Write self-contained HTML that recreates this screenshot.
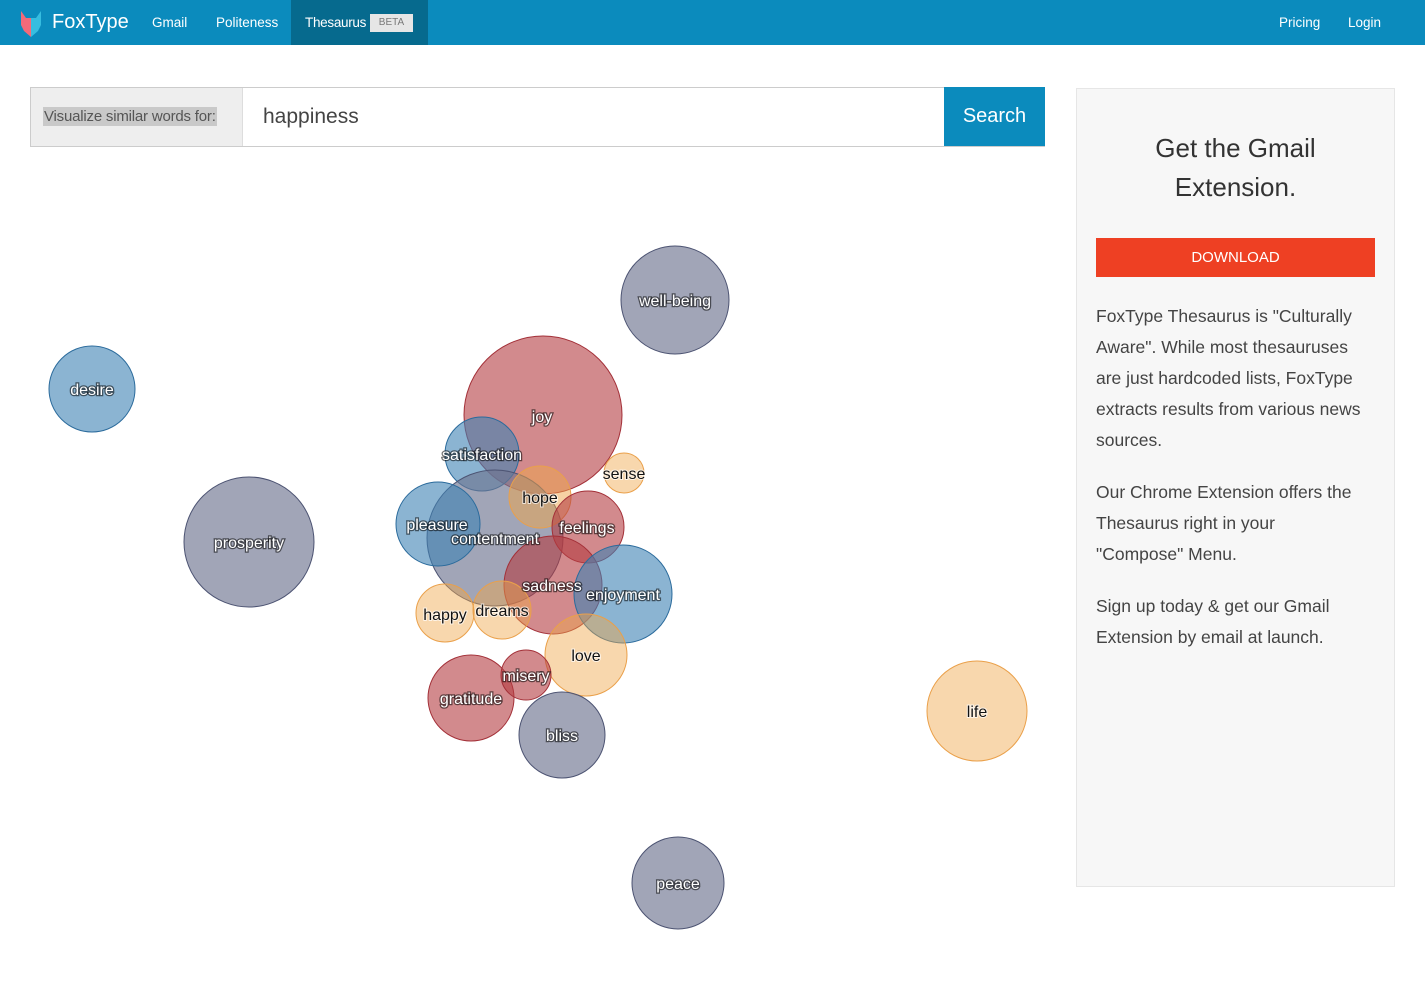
<!DOCTYPE html>
<html><head><meta charset="utf-8"><style>
*{margin:0;padding:0;box-sizing:border-box}
body{width:1425px;height:982px;background:#fff;font-family:"Liberation Sans",sans-serif;position:relative;overflow:hidden}
.nav{position:absolute;left:0;top:0;width:1425px;height:45px;background:#0b8bbd}
.nav a{position:absolute;top:0;height:45px;line-height:45px;color:#fff;font-size:13.5px;text-decoration:none}
.act{position:absolute;left:291px;top:0;width:137px;height:45px;background:#066a8e}
.beta{position:absolute;left:370px;top:14px;width:43px;height:18px;background:#e6e6e6;color:#777;font-size:10px;text-align:center;line-height:18px}
.search{position:absolute;left:30px;top:87px;width:1015px;height:60px;border:1px solid #ccc}
.lbl{position:absolute;left:0;top:0;width:212px;height:58px;background:#eee;border-right:1px solid #ddd}
.lbl span{position:absolute;left:12px;top:19px;background:#c9c9c9;color:#555;font-size:15px;padding:1px 1px;letter-spacing:-0.2px}
.q{position:absolute;left:232px;top:17px;font-size:21px;color:#444}
.btn{position:absolute;left:944px;top:87px;width:101px;height:59px;background:#0b8bbd;color:#fff;font-size:20px;text-align:center;line-height:59px}
.side{position:absolute;left:1076px;top:88px;width:319px;height:799px;background:#f7f7f7;border:1px solid #e6e6e6}
.side h2{position:absolute;left:0;top:40px;width:317px;text-align:center;font-weight:normal;font-size:26px;line-height:39px;color:#333}
.dl{position:absolute;left:19px;top:149px;width:279px;height:39px;background:#ee4023;color:#fff;text-align:center;line-height:39px;font-size:15px}
.side p{position:absolute;left:19px;white-space:nowrap;font-size:17.5px;line-height:31px;color:#444}
svg text{font-family:"Liberation Sans",sans-serif;font-size:16px;text-anchor:middle}
.w{fill:#fff;paint-order:stroke;stroke:rgba(0,0,0,.55);stroke-width:2.5px}
.k{fill:#111;paint-order:stroke;stroke:rgba(255,255,255,.7);stroke-width:2px}
</style></head><body>
<div class="nav">
<svg style="position:absolute;left:20px;top:11px" width="22" height="26" viewBox="0 0 22 26"><path d="M1 0 L6 7 L11 7 L11 26 L4 20 L1 14Z" fill="#f26a7a"/><path d="M21 0 L16 7 L11 7 L11 26 L18 20 L21 14Z" fill="#36bde0"/></svg>
<a style="left:52px;font-size:20px">FoxType</a>
<a style="left:152px">Gmail</a>
<a style="left:216px">Politeness</a>
<div class="act"></div>
<a style="left:305px;letter-spacing:-0.3px">Thesaurus</a>
<div class="beta">BETA</div>
<a style="left:1279px">Pricing</a>
<a style="left:1348px">Login</a>
</div>
<div class="search"><div class="lbl"><span>Visualize similar words for:</span></div><div class="q">happiness</div></div>
<div class="btn">Search</div>
<div class="side">
<h2>Get the Gmail<br>Extension.</h2>
<div class="dl">DOWNLOAD</div>
<p style="top:212px">FoxType Thesaurus is "Culturally<br>Aware". While most thesauruses<br>are just hardcoded lists, FoxType<br>extracts results from various news<br>sources.</p>
<p style="top:388px">Our Chrome Extension offers the<br>Thesaurus right in your<br>"Compose" Menu.</p>
<p style="top:502px">Sign up today &amp; get our Gmail<br>Extension by email at launch.</p>
</div>
<svg style="position:absolute;left:0;top:0" width="1060" height="982">
<g stroke-width="1">
<circle cx="675" cy="300" r="54" fill="rgba(110,117,145,.65)" stroke="#4c5372"/>
<circle cx="92" cy="389" r="43" fill="rgba(61,130,180,.6)" stroke="#2b6b9c"/>
<circle cx="249" cy="542" r="65" fill="rgba(110,117,145,.65)" stroke="#4c5372"/>
<circle cx="543" cy="415" r="79" fill="rgba(180,60,65,.6)" stroke="#a33038"/>
<circle cx="482" cy="454" r="37" fill="rgba(61,130,180,.6)" stroke="#2b6b9c"/>
<circle cx="624" cy="473" r="20" fill="rgba(240,166,74,.45)" stroke="#eaa04a"/>
<circle cx="495" cy="538" r="68" fill="rgba(110,117,145,.65)" stroke="#4c5372"/>
<circle cx="438" cy="524" r="42" fill="rgba(61,130,180,.6)" stroke="#2b6b9c"/>
<circle cx="540" cy="497" r="31" fill="rgba(240,166,74,.5)" stroke="#eaa04a"/>
<circle cx="588" cy="527" r="36" fill="rgba(180,60,65,.6)" stroke="#a33038"/>
<circle cx="553" cy="585" r="49" fill="rgba(180,60,65,.6)" stroke="#a33038"/>
<circle cx="623" cy="594" r="49" fill="rgba(61,130,180,.6)" stroke="#2b6b9c"/>
<circle cx="445" cy="613" r="29" fill="rgba(240,166,74,.45)" stroke="#eaa04a"/>
<circle cx="502" cy="610" r="29" fill="rgba(240,166,74,.45)" stroke="#eaa04a"/>
<circle cx="586" cy="655" r="41" fill="rgba(240,166,74,.45)" stroke="#eaa04a"/>
<circle cx="471" cy="698" r="43" fill="rgba(180,60,65,.6)" stroke="#a33038"/>
<circle cx="526" cy="675" r="25" fill="rgba(180,60,65,.6)" stroke="#a33038"/>
<circle cx="562" cy="735" r="43" fill="rgba(110,117,145,.65)" stroke="#4c5372"/>
<circle cx="977" cy="711" r="50" fill="rgba(240,166,74,.45)" stroke="#eaa04a"/>
<circle cx="678" cy="883" r="46" fill="rgba(110,117,145,.65)" stroke="#4c5372"/>
</g>
<text class="w" x="675" y="306">well-being</text>
<text class="w" x="92" y="395">desire</text>
<text class="w" x="249" y="548">prosperity</text>
<text class="w" x="542" y="422">joy</text>
<text class="w" x="482" y="460">satisfaction</text>
<text class="k" x="624" y="479">sense</text>
<text class="k" x="540" y="503">hope</text>
<text class="w" x="437" y="530">pleasure</text>
<text class="w" x="495" y="544">contentment</text>
<text class="w" x="587" y="533">feelings</text>
<text class="w" x="552" y="591">sadness</text>
<text class="w" x="623" y="600">enjoyment</text>
<text class="k" x="445" y="620">happy</text>
<text class="k" x="502" y="616">dreams</text>
<text class="k" x="586" y="661">love</text>
<text class="w" x="526" y="681">misery</text>
<text class="w" x="471" y="704">gratitude</text>
<text class="w" x="562" y="741">bliss</text>
<text class="k" x="977" y="717">life</text>
<text class="w" x="678" y="889">peace</text>
</svg>
</body></html>
